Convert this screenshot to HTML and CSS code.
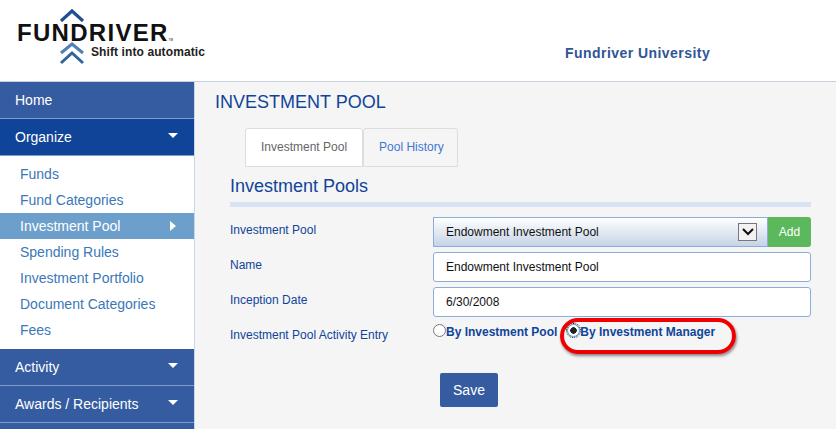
FILE: index.html
```html
<!DOCTYPE html>
<html>
<head>
  <title>Fundriver - Investment Pool</title>
  <link rel="stylesheet" href="styles.css">
</head>
<body>
  <div class="header">
    <div class="logo">
      <svg class="logo-top" width="26" height="14" viewBox="0 0 26 14">
        <path d="M2 13 L13 3 L24 13" fill="none" stroke="#1f4f8f" stroke-width="3.2"/>
      </svg>
      <div class="logo-name">FUNDRIVER<span class="logo-tm">TM</span></div>
      <div class="logo-row">
        <svg width="26" height="23" viewBox="0 0 26 23">
          <path d="M2 11 L13 2 L24 11" fill="none" stroke="#4f81b8" stroke-width="3"/>
          <path d="M2 21 L13 11 L24 21" fill="none" stroke="#2f659f" stroke-width="3"/>
        </svg>
        <span class="logo-tag">Shift into automatic</span>
      </div>
    </div>
    <div class="org-name">Fundriver University</div>
  </div>

  <div class="main">
    <div class="sidebar">
      <div class="nav-item">Home</div>
      <div class="nav-item nav-open">Organize<span class="caret"></span></div>
      <div class="subnav">
        <div class="sub-item">Funds</div>
        <div class="sub-item">Fund Categories</div>
        <div class="sub-item sub-active">Investment Pool<span class="caret-right"></span></div>
        <div class="sub-item">Spending Rules</div>
        <div class="sub-item">Investment Portfolio</div>
        <div class="sub-item">Document Categories</div>
        <div class="sub-item">Fees</div>
      </div>
      <div class="nav-item">Activity<span class="caret"></span></div>
      <div class="nav-item">Awards / Recipients<span class="caret"></span></div>
      <div class="nav-item"></div>
    </div>

    <div class="content">
      <h1>INVESTMENT POOL</h1>
      <div class="tabs">
        <div class="tab tab-active">Investment Pool</div>
        <div class="tab">Pool History</div>
      </div>
      <h2>Investment Pools</h2>

      <div class="form-row">
        <label>Investment Pool</label>
        <div class="select-group">
          <div class="select-box">
            <span>Endowment Investment Pool</span>
            <span class="select-arrow">
              <svg width="12" height="8" viewBox="0 0 12 8">
                <path d="M1 1 L6 6 L11 1" fill="none" stroke="#111" stroke-width="2"/>
              </svg>
            </span>
          </div>
          <div class="add-btn">Add</div>
        </div>
      </div>
      <div class="form-row">
        <label>Name</label>
        <div class="text-box">Endowment Investment Pool</div>
      </div>
      <div class="form-row">
        <label>Inception Date</label>
        <div class="text-box">6/30/2008</div>
      </div>
      <div class="form-row radio-row">
        <label>Investment Pool Activity Entry</label>
        <div class="radios">
          <span class="radio"></span><span class="radio-label">By Investment Pool</span>
          <span class="radio radio-on"></span><span class="radio-label">By Investment Manager</span>
          <div class="callout"></div>
        </div>
      </div>
      <div class="save-btn">Save</div>
    </div>
  </div>
</body>
</html>
```

FILE: styles.css
```css
html, body {
  margin: 0;
  height: 100%;
  overflow: hidden;
}

body {
  background-color: #f5f5f5;
  font-family: "Liberation Sans", Arial, sans-serif;
  font-size: 12px;
  color: #104499;
}

.header {
  display: flex;
  height: 81px;
  background-color: #ffffff;
  border-bottom: 1px solid #c9cfdb;
}

.logo {
  width: 565px;
  padding: 8px 0 0 17px;
  box-sizing: border-box;
  color: #111111;
}

.logo-top {
  display: block;
  margin-left: 42px;
}

.logo-name {
  margin-top: -1px;
  height: 24px;
  font-size: 24px;
  line-height: 24px;
  font-weight: bold;
  letter-spacing: 1.3px;
}

.logo-tm {
  font-size: 3px;
  font-weight: normal;
  letter-spacing: 0;
}

.logo-row {
  display: flex;
  margin: -3px 0 0 42px;
}

.logo-tag {
  margin: 3px 0 0 6px;
  font-size: 12px;
  font-weight: bold;
  letter-spacing: 0.1px;
  color: #222222;
}

.org-name {
  margin-top: 45px;
  font-size: 14px;
  font-weight: bold;
  letter-spacing: 0.45px;
  color: #2f5597;
}

.main {
  display: flex;
}

.sidebar {
  width: 194px;
  height: 347px;
  overflow: hidden;
  background-color: #ffffff;
  border-right: 1px solid #c9d7ea;
}

.nav-item {
  display: flex;
  justify-content: space-between;
  height: 36px;
  padding: 0 15px;
  border-bottom: 1px solid #7f9bc9;
  background-color: #355ca0;
  color: #ffffff;
  font-size: 14px;
  line-height: 36px;
}

.nav-open {
  background-color: #104499;
}

.caret {
  width: 0;
  height: 0;
  margin: 14px 1px 0 0;
  border-left: 5px solid transparent;
  border-right: 5px solid transparent;
  border-top: 5px solid #ffffff;
}

.subnav {
  padding: 5px 0 6px;
}

.sub-item {
  display: flex;
  justify-content: space-between;
  align-items: center;
  height: 26px;
  padding: 0 18px 0 20px;
  color: #3a78b8;
  font-size: 14px;
}

.sub-active {
  background-color: #6c9fcb;
  color: #ffffff;
}

.caret-right {
  width: 0;
  height: 0;
  border-top: 5px solid transparent;
  border-bottom: 5px solid transparent;
  border-left: 6px solid #ffffff;
}

.content {
  flex: 1;
  padding: 0 25px 0 20px;
}

h1 {
  margin: 10px 0 0;
  font-size: 18px;
  line-height: 21px;
  font-weight: normal;
  color: #104499;
}

.tabs {
  display: flex;
  margin: 15px 0 0 30px;
}

.tab {
  height: 37px;
  padding: 0 15px;
  border: 1px solid #dddddd;
  border-radius: 3px 3px 0 0;
  color: #3f77d4;
  line-height: 37px;
}

.tab + .tab {
  padding-right: 13px;
}

.tab-active {
  background-color: #ffffff;
  color: #666666;
}

h2 {
  margin: 8px 0 0 15px;
  padding-bottom: 5px;
  border-bottom: 5px solid #d8e4f5;
  font-size: 18px;
  line-height: 22px;
  font-weight: normal;
  color: #104499;
}

.form-row {
  display: flex;
  height: 35px;
  margin-left: 15px;
  align-items: center;
}

h2 + .form-row {
  margin-top: 10px;
}

label {
  width: 203px;
  padding-bottom: 9px;
  flex-shrink: 0;
}

.select-group {
  display: flex;
  flex: 1;
  height: 30px;
  margin-bottom: 5px;
}

.select-box {
  display: flex;
  flex: 1;
  justify-content: space-between;
  align-items: center;
  padding: 0 10px 0 12px;
  border: 1px solid #8cadda;
  background: linear-gradient(#ffffff, #c5d3e6);
  color: #111111;
}

.select-arrow {
  display: flex;
  justify-content: center;
  align-items: center;
  width: 17px;
  height: 16px;
  border: 1px solid #777777;
  background-color: #f2f2f2;
}

.add-btn {
  width: 43px;
  border-radius: 0 3px 3px 0;
  background-color: #5cb85c;
  color: #ffffff;
  font-size: 12px;
  line-height: 30px;
  text-align: center;
}

.text-box {
  flex: 1;
  height: 28px;
  margin-bottom: 5px;
  padding: 0 12px;
  border: 1px solid #8cadda;
  border-radius: 3px;
  background-color: #ffffff;
  color: #111111;
  line-height: 28px;
}

.radio-row {
  align-items: flex-start;
}

.radio-row label {
  padding-top: 6px;
}

.radios {
  position: relative;
  display: flex;
  align-items: center;
  height: 20px;
}

.radio {
  width: 11px;
  height: 11px;
  margin-bottom: 3px;
  border: 1px solid #777777;
  border-radius: 50%;
  background-color: #ffffff;
}

.radio-on {
  margin-left: 10px;
  background: radial-gradient(circle, #222222 3px, #ffffff 3.5px);
  border-color: #4aa3d8;
  outline: 1px dotted #111111;
}

.radio-label {
  font-weight: bold;
}

.callout {
  position: absolute;
  left: 127px;
  top: -4px;
  width: 168px;
  height: 28px;
  border: 4px solid #ee0000;
  border-radius: 18px;
  box-shadow: 1px 2px 3px rgba(0, 0, 0, 0.45);
}

.save-btn {
  width: 58px;
  height: 34px;
  margin: 16px 0 0 225px;
  border-radius: 2px;
  background-color: #355ca0;
  color: #ffffff;
  font-size: 14px;
  line-height: 34px;
  text-align: center;
}
```
